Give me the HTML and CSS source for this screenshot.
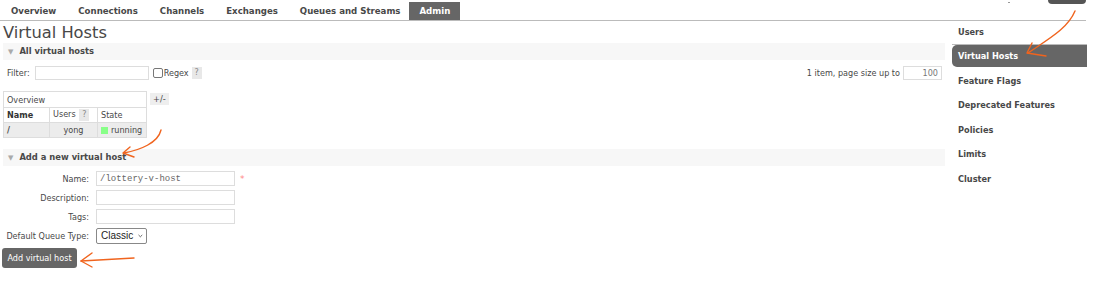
FILE: index.html
```html
<!DOCTYPE html>
<html>
<head>
<meta charset="utf-8">
<title>Virtual Hosts</title>
<link rel="stylesheet" href="styles.css">
</head>
<body>
<div class="page">
  <header class="topbar">
    <nav class="tabs">
      <a class="tab">Overview</a>
      <a class="tab">Connections</a>
      <a class="tab">Channels</a>
      <a class="tab">Exchanges</a>
      <a class="tab">Queues and Streams</a>
      <a class="tab active">Admin</a>
    </nav>
    <div class="topright">
      <span class="dot"></span>
      <span class="userbtn"></span>
    </div>
  </header>
  <div class="layout">
    <main class="main">
      <h1 class="title">Virtual Hosts</h1>
      <section class="section">
        <h2 class="section-head"><span class="tri">&#9660;</span>All virtual hosts</h2>
        <div class="filter-row">
          <div class="filter-left">
            <label class="lbl">Filter:</label>
            <input class="txt filter-input" type="text">
            <input class="chk" type="checkbox">
            <span class="lbl">Regex</span>
            <span class="help">?</span>
          </div>
          <div class="filter-right">
            <span class="lbl">1 item, page size up to</span>
            <input class="txt page-input" type="text" value="100">
          </div>
        </div>
        <div class="table-row">
          <table class="list">
            <tr class="grp"><th colspan="3">Overview</th></tr>
            <tr class="hdr">
              <th class="c-name">Name</th>
              <th class="c-users">Users <span class="help">?</span></th>
              <th class="c-state">State</th>
            </tr>
            <tr class="data">
              <td class="c-name"><b>/</b></td>
              <td class="c-users center">yong</td>
              <td class="c-state"><span class="green"></span>running</td>
            </tr>
          </table>
          <span class="plusminus">+/-</span>
        </div>
      </section>
      <section class="section">
        <h2 class="section-head"><span class="tri">&#9660;</span>Add a new virtual host</h2>
        <form class="form">
          <div class="frow"><label class="flabel">Name:</label><input class="txt field mono" type="text" value="/lottery-v-host"><span class="req">*</span></div>
          <div class="frow"><label class="flabel">Description:</label><input class="txt field" type="text"></div>
          <div class="frow"><label class="flabel">Tags:</label><input class="txt field" type="text"></div>
          <div class="frow"><label class="flabel">Default Queue Type:</label><span class="select">Classic<svg width="9" height="6" viewBox="0 0 9 6"><path d="M1 1 L4.5 4.5 L8 1" fill="none" stroke="#333" stroke-width="1.4"/></svg></span></div>
          <button class="btn" type="button">Add virtual host</button>
        </form>
      </section>
    </main>
    <aside class="side">
      <a class="sitem">Users</a>
      <a class="sitem active">Virtual Hosts</a>
      <a class="sitem">Feature Flags</a>
      <a class="sitem">Deprecated Features</a>
      <a class="sitem">Policies</a>
      <a class="sitem">Limits</a>
      <a class="sitem">Cluster</a>
    </aside>
  </div>
  <svg class="annot" width="1095" height="308" viewBox="0 0 1095 308">
    <g fill="none" stroke="#f0641e" stroke-width="1.4" stroke-linecap="round" stroke-linejoin="round">
      <path d="M1075 11 C1068 28 1050 38 1028 53"/>
      <path d="M1032 43 L1027 53 L1046 56"/>
      <path d="M161 130 C158 143 140 150 124 153"/>
      <path d="M130 147 L123 153 L134 157"/>
      <path d="M134 258 L81 261"/>
      <path d="M92 253 L81 261 L92 267"/>
    </g>
  </svg>
</div>
</body>
</html>
```
FILE: styles.css
```css
* { box-sizing: border-box; }
html, body { margin: 0; padding: 0; background: #fff; }
body {
  font-family: "DejaVu Sans", Verdana, sans-serif;
  font-size: 8.1px;
  color: #484848;
}
.page { position: relative; width: 1095px; height: 308px; overflow: hidden; }

.topbar {
  display: flex;
  justify-content: space-between;
  align-items: flex-start;
  width: 1086px;
  height: 21px;
  border-bottom: 1px solid #bbb;
}
.tabs { display: flex; align-items: flex-end; height: 20px; }
.tab {
  display: block;
  font-weight: bold;
  font-size: 8.6px;
  padding: 0 11px;
  height: 18px;
  line-height: 18px;
  color: #484848;
}
.tab.active { background: #666; color: #fff; margin-left: -2px; padding: 0 10px; }
.topright { display: flex; align-items: flex-start; gap: 38px; }
.dot { width: 2px; height: 1px; background: #999; margin-top: 2px; }
.userbtn { width: 38px; height: 4px; background: #555; border-radius: 0 0 4px 4px; }

.layout { display: flex; }
.main { width: 945px; padding-left: 3px; }
.title {
  font-size: 16.3px;
  font-weight: normal;
  margin: 3px 0 1px 0;
  line-height: 18px;
  color: #484848;
}
.section-head {
  margin: 0;
  height: 17px;
  line-height: 17px;
  background: #f7f7f7;
  font-size: 8.4px;
  font-weight: bold;
  padding-left: 5px;
}
.tri { color: #aaa; font-size: 7px; margin-right: 6px; }

.filter-row {
  display: flex;
  justify-content: space-between;
  align-items: center;
  height: 25px;
  padding: 0 3px 0 4px;
}
.filter-left, .filter-right { display: flex; align-items: center; }
.txt {
  font-family: "DejaVu Sans", sans-serif;
  font-size: 8.1px;
  color: #484848;
  height: 14px;
  border: 1px solid #ddd;
  padding: 0 3px;
  margin: 0;
  background: #fff;
  outline: none;
}
.filter-input { width: 114px; margin-left: 5px; }
.chk {
  appearance: none;
  width: 10px; height: 10px;
  border: 1px solid #777;
  border-radius: 2px;
  margin: 0 1px 0 4px;
  background: #fff;
}
.help {
  display: inline-block;
  background: #e8e8e8;
  color: #888;
  width: 10px;
  height: 12px;
  line-height: 12px;
  text-align: center;
  font-size: 8px;
  margin-left: 3px;
}
.page-input { width: 39px; text-align: right; margin-left: 3px; color: #777; }

.table-row { display: flex; align-items: flex-start; margin-top: 6px; }
.list { border-collapse: collapse; width: 144px; }
.list th, .list td {
  border: 1px solid #ddd;
  height: 15px;
  padding: 0 3px;
  text-align: left;
  font-size: 8.1px;
  white-space: nowrap;
}
.list .grp th { font-weight: normal; height: 16px; }
.list .hdr th { font-weight: normal; }
.list .hdr th.c-name { font-weight: bold; color: #333; }
.list .hdr .help { margin-left: 1px; }
.list .data td { background: #ececec; }
.c-name { width: 46px; }
.c-users { width: 48px; }
.center { text-align: center !important; }
.green { display: inline-block; width: 7px; height: 7px; background: #8f8; margin-right: 3px; vertical-align: -1px; }
.plusminus {
  background: #eee;
  height: 12px;
  line-height: 12px;
  padding: 0 3px;
  margin: 2px 0 0 3px;
  font-size: 8.3px;
}

.section + .section { margin-top: 11px; }
.form { padding-top: 3px; }
.frow { display: flex; align-items: center; height: 19px; }
.flabel { width: 86px; margin-right: 7px; text-align: right; white-space: nowrap; }
.field { width: 139px; height: 15px; }
.mono { font-family: "Liberation Mono", "DejaVu Sans Mono", monospace; color: #666; font-size: 9px; }
.req { color: #f88; margin-left: 5px; font-size: 9px; }
.select {
  display: flex; align-items: center; gap: 5px;
  height: 16px;
  width: 51px;
  border: 1px solid #888;
  border-radius: 2px;
  padding: 0 3px 0 4px;
  font-family: "Liberation Sans", Arial, sans-serif;
  font-size: 10px;
  color: #222;
}
.btn {
  display: block;
  margin-top: 3px;
  margin-left: -1px;
  background: #666;
  color: #fff;
  border: 0;
  border-radius: 3px;
  height: 20px;
  width: 75px;
  font-family: "DejaVu Sans", sans-serif;
  font-size: 8.1px;
  padding: 0;
}

.side { width: 135px; margin-left: 7px; display: flex; flex-direction: column; padding-top: 1px; }
.sitem {
  display: block;
  height: 22px;
  line-height: 22px;
  padding-left: 6px;
  margin-bottom: 2.5px;
  font-weight: bold;
  font-size: 8.2px;
  color: #484848;
  white-space: nowrap;
}
.sitem:first-child { border-bottom: 1px solid #bbb; margin-bottom: 0; height: 23px; line-height: 20px; }
.sitem.active { background: #666; color: #fff; border-radius: 5px 0 0 5px; }

.annot { position: absolute; left: 0; top: 0; pointer-events: none; }
```
